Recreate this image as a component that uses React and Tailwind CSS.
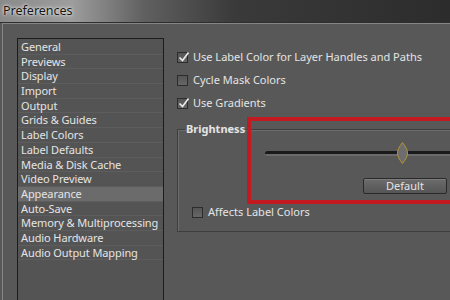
const ITEMS = [
  'General',
  'Previews',
  'Display',
  'Import',
  'Output',
  'Grids & Guides',
  'Label Colors',
  'Label Defaults',
  'Media & Disk Cache',
  'Video Preview',
  'Appearance',
  'Auto-Save',
  'Memory & Multiprocessing',
  'Audio Hardware',
  'Audio Output Mapping'
]

function Check({ checked }) {
  return (
    <span className="relative inline-block w-[11px] h-[11px] border border-[#2c2c2c] bg-[linear-gradient(180deg,#555,#666)] shrink-0">
      {checked && (
        <svg
          className="absolute left-[0px] top-[-2px]"
          width="12"
          height="12"
          viewBox="0 0 12 12"
        >
          <path
            d="M1.5 6.5 L4.5 9.5 L10.5 1.5"
            fill="none"
            stroke="#ececec"
            strokeWidth="1.6"
          />
        </svg>
      )}
    </span>
  )
}

function CheckRow({ checked, label, className = '' }) {
  return (
    <div className={`flex items-center gap-[5px] h-[23px] ${className}`}>
      <Check checked={checked} />
      <span>{label}</span>
    </div>
  )
}

export default function App() {
  return (
    <div className="relative w-[450px] h-[300px] overflow-hidden bg-[#585858] text-[11px] text-[#e4e4e4] font-['Noto_Sans','DejaVu_Sans',sans-serif]">
      <div className="h-[22px] flex items-center pl-[3px] bg-[linear-gradient(90deg,#8a8a8a_0%,#9d9d9d_16%,#606060_32%,#3a3a3a_52%,#2c2c2c_100%)]">
        <span className="text-[12.5px] text-[#161616] [text-shadow:0_0_4px_#fff,0_0_2px_#ddd]">
          Preferences
        </span>
      </div>
      <div className="h-px bg-[#2e2e2e]" />
      <div className="ml-[2px] h-[277px] border-l border-t border-[#858585] flex">
        <div className="ml-[14px] mt-[14px] w-[147px] h-[280px] pt-px border border-[#1c1c1c] bg-[#545454] shrink-0">
          {ITEMS.map(item => (
            <div
              key={item}
              className={`h-[14.7px] leading-[14px] pl-[3px] border-b border-[#5d5d5d] tracking-[-0.1px] ${
                item === 'Appearance' ? 'bg-[#6b6b6b]' : ''
              }`}
            >
              {item}
            </div>
          ))}
        </div>

        <div className="ml-[13px] mt-[22px] shrink-0">
          <CheckRow checked label="Use Label Color for Layer Handles and Paths" />
          <CheckRow label="Cycle Mask Colors" />
          <CheckRow checked label="Use Gradients" />

          <fieldset className="mt-[7px] w-[300px] border border-[#3e3e3e] shadow-[inset_1px_1px_0_#6c6c6c] pb-[7px]">
            <legend className="ml-[7px] px-px font-bold h-[14px] leading-[14px]">
              Brightness
            </legend>
            <div className="relative mt-[6px] ml-[87px] h-[22px] flex items-center">
              <div className="w-full h-[5px] border-t-[3px] border-[#1a1a1a] border-b-2 border-b-[#6a6a6a] rounded-l-full" />
              <svg
                className="absolute left-[132px] top-0"
                width="11"
                height="22"
                viewBox="0 0 11 22"
              >
                <path
                  d="M5.5 0.5 C9 5 10.5 8 10.5 11 C10.5 14 9 17 5.5 21.5 C2 17 0.5 14 0.5 11 C0.5 8 2 5 5.5 0.5 Z"
                  fill="#6d6d6d"
                  stroke="#b8942c"
                  strokeWidth="1"
                />
              </svg>
            </div>
            <div className="mt-[14px] ml-[185px] w-[84px] h-[16px] flex items-center justify-center border border-[#2a2a2a] rounded-[2px] bg-[linear-gradient(180deg,#6c6c6c,#555)] shadow-[inset_0_1px_0_#7c7c7c]">
              Default
            </div>
            <CheckRow label="Affects Label Colors" className="mt-[7px] pl-[14px]" />
          </fieldset>
        </div>
      </div>

      <div className="absolute left-[247px] top-[117px] w-[230px] h-[87px] border-4 border-[#c31a21]" />
    </div>
  )
}
